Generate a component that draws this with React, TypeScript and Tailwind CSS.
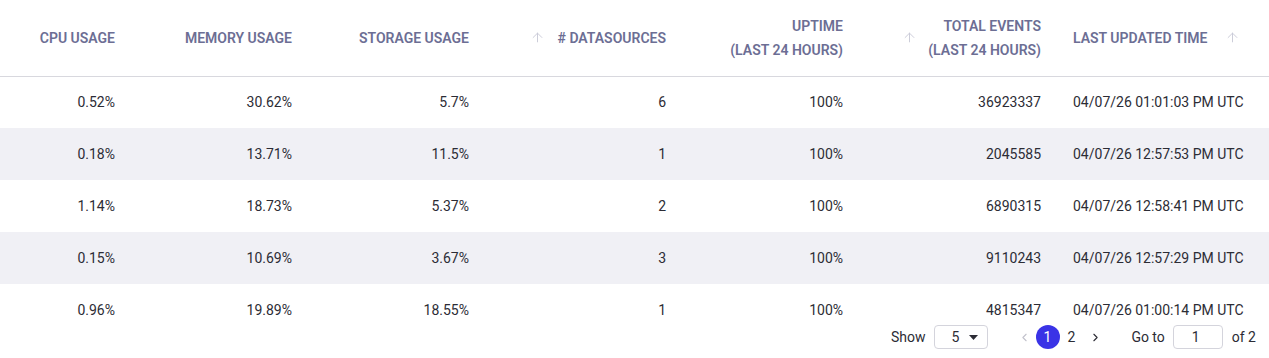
import { ArrowUp, ChevronLeft, ChevronRight } from 'lucide-react';

interface Row {
  cpu: string;
  memory: string;
  storage: string;
  datasources: number;
  uptime: string;
  events: string;
  updated: string;
}

const rows: Row[] = [
  { cpu: '0.52%', memory: '30.62%', storage: '5.7%', datasources: 6, uptime: '100%', events: '36923337', updated: '04/07/26 01:01:03 PM UTC' },
  { cpu: '0.18%', memory: '13.71%', storage: '11.5%', datasources: 1, uptime: '100%', events: '2045585', updated: '04/07/26 12:57:53 PM UTC' },
  { cpu: '1.14%', memory: '18.73%', storage: '5.37%', datasources: 2, uptime: '100%', events: '6890315', updated: '04/07/26 12:58:41 PM UTC' },
  { cpu: '0.15%', memory: '10.69%', storage: '3.67%', datasources: 3, uptime: '100%', events: '9110243', updated: '04/07/26 12:57:29 PM UTC' },
  { cpu: '0.96%', memory: '19.89%', storage: '18.55%', datasources: 1, uptime: '100%', events: '4815347', updated: '04/07/26 01:00:14 PM UTC' }
];

function SortArrow() {
  return <ArrowUp className="w-[15px] h-[15px] text-[#c9cad6] shrink-0" strokeWidth={1.5} />;
}

export default function App() {
  return (
    <div className="w-[1269px] h-[358px] overflow-hidden bg-white font-['Roboto',sans-serif] text-[14px] text-[#2c2c35]">
      <table className="table-fixed w-[1269px] border-collapse">
        <colgroup>
          <col className="w-[131px]" />
          <col className="w-[177px]" />
          <col className="w-[177px]" />
          <col className="w-[197px]" />
          <col className="w-[177px]" />
          <col className="w-[198px]" />
          <col className="w-[212px]" />
        </colgroup>
        <thead>
          <tr className="h-[76px] border-b border-[#d8d8de] text-[#6c6e94] uppercase leading-[24px]">
            <th className="pr-4 text-right font-semibold">CPU Usage</th>
            <th className="pr-4 text-right font-semibold">Memory Usage</th>
            <th className="pr-4 text-right font-semibold">Storage Usage</th>
            <th className="pr-4 font-semibold">
              <div className="flex items-center justify-end gap-[13px]">
                <SortArrow />
                <span># Datasources</span>
              </div>
            </th>
            <th className="pr-4 text-right font-semibold">
              <div>Uptime</div>
              <div>(Last 24 Hours)</div>
            </th>
            <th className="pr-4 font-semibold">
              <div className="flex items-center justify-end gap-[11px]">
                <SortArrow />
                <div className="text-right">
                  <div>Total Events</div>
                  <div>(Last 24 Hours)</div>
                </div>
              </div>
            </th>
            <th className="pl-4 font-semibold">
              <div className="flex items-center gap-[17px]">
                <span>Last Updated Time</span>
                <SortArrow />
              </div>
            </th>
          </tr>
        </thead>
        <tbody>
          {rows.map((r, i) => (
            <tr key={i} className={`h-[52px] ${i % 2 === 1 ? 'bg-[#f0f0f5]' : 'bg-white'}`}>
              <td className="pr-4 text-right">{r.cpu}</td>
              <td className="pr-4 text-right">{r.memory}</td>
              <td className="pr-4 text-right">{r.storage}</td>
              <td className="pr-4 text-right">{r.datasources}</td>
              <td className="pr-4 text-right">{r.uptime}</td>
              <td className="pr-4 text-right">{r.events}</td>
              <td className="pl-4 whitespace-nowrap">{r.updated}</td>
            </tr>
          ))}
        </tbody>
      </table>

      {/* pagination sits over the bottom of the last row */}
      <div className="relative -mt-[12px] flex items-center justify-end pr-[13px] h-[26px] text-[#2c2c35]">
        <span>Show</span>
        <div className="ml-[8px] flex items-center w-[54px] h-[24px] border border-[#d4d4dc] rounded-[4px] pl-[17px]">
          <span>5</span>
          <svg className="ml-[10px]" width="9" height="5" viewBox="0 0 9 5">
            <path d="M0 0 L9 0 L4.5 5 Z" fill="#2c2c35" />
          </svg>
        </div>
        <div className="ml-[30px] flex items-center">
          <ChevronLeft className="w-[13px] h-[13px] text-[#c2c2cc]" strokeWidth={2} />
          <span className="ml-[5px] w-[24px] h-[24px] rounded-full bg-[#3a33e6] text-white flex items-center justify-center">1</span>
          <span className="ml-[8px]">2</span>
          <ChevronRight className="ml-[14px] w-[13px] h-[13px] text-[#2c2c35]" strokeWidth={2} />
        </div>
        <span className="ml-[29px]">Go to</span>
        <div className="ml-[8px] w-[50px] h-[24px] border border-[#d4d4dc] rounded-[4px] flex items-center pl-[18px]">1</div>
        <span className="ml-[9px]">of 2</span>
      </div>
    </div>
  );
}
